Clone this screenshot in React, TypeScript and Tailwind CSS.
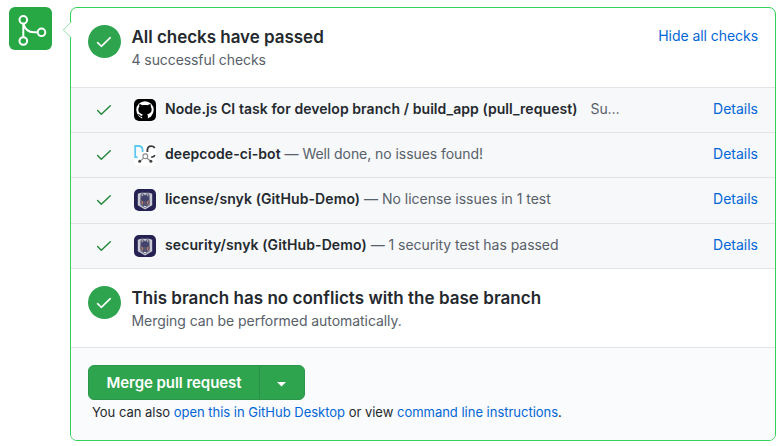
import React from "react";

function Tick({ weight = 1.5 }: { weight?: number }) {
  return (
    <svg width="16" height="12" viewBox="0 0 16 12" fill="none" stroke="currentColor" strokeWidth={weight} strokeLinecap="round" strokeLinejoin="round">
      <path d="M1.6 6.6 5.300 10.300 14.300 1.700" />
    </svg>
  );
}

function StatusCircle() {
  return (
    <div className="flex size-[33px] shrink-0 items-center justify-center rounded-full bg-[#2ea44f] pr-px text-white">
      <Tick weight={1.6} />
    </div>
  );
}

function GitHubAvatar() {
  return (
    <svg width="22" height="22" viewBox="0 0 22 22">
      <rect width="22" height="22" rx="5" fill="#000" />
      <circle cx="11" cy="11" r="8.700" fill="#fff" />
      <path
        d="M5.4 5.2c1.1-.1 2.2.5 3 1.1 1.7-.4 3.5-.4 5.2 0 .8-.6 1.9-1.2 3-1.1.4 1 .4 1.9.1 2.6.7.8 1 1.700 1 2.800 0 3-1.900 4.200-4.500 4.600.5.5.7 1.200.7 2v2.500c-2 .6-3.900.6-5.800 0v-1.900c-2.300.4-2.800-.8-3.400-1.700-.3-.5-.7-.7-.9-1 .9-.3 1.600.2 2.100 1 .5.8 1.200.9 2.200.7.1-.6.3-1.100.7-1.500-2.700-.4-4.500-1.700-4.500-4.700 0-1.100.3-2 1-2.800-.3-.7-.3-1.600.1-2.600Z"
        fill="#000"
      />
    </svg>
  );
}

function DeepCodeAvatar() {
  return (
    <svg width="22" height="22" viewBox="0 0 22 22" fill="none">
      <rect width="22" height="22" rx="5" fill="#fff" />
      <path d="M3.600 13.200H1.200V2h3.200C7.300 2 8.600 3.700 8.600 6v2" stroke="#5cc8f2" strokeWidth="1.800" />
      <path d="M13.400 8V5.900c0-2.300 1.500-3.700 3.700-3.700 1.600 0 2.900.7 3.700 1.800M17.200 13.200c1.800 0 2.900-.7 3.800-1.900" stroke="#3a3a3a" strokeWidth="1.800" />
      <circle cx="11.300" cy="12.300" r="2.400" stroke="#8b8b8b" strokeWidth="1.100" />
      <path d="M9.600 14.200 5.900 17.300M13 14.200l3.900 3.100" stroke="#8b8b8b" strokeWidth="1.100" />
      <circle cx="5.700" cy="17.300" r="1.500" fill="#444" />
      <circle cx="16.900" cy="17.300" r="1.500" fill="#444" />
    </svg>
  );
}

function SnykAvatar() {
  return (
    <svg width="22" height="22" viewBox="0 0 22 22">
      <rect width="22" height="22" rx="5" fill="#252152" />
      <path d="M3.800 4.700 7 3.800h8l3.200.9v11.500L11 20.600l-7.200-4.400Z" fill="#c9cad3" />
      <path d="M6 5.500h10v10.700l-5 3.100-5-3.100Z" fill="#85879b" />
      <path d="M7 9 8 1.200 9.900 6.200h2.200L14 1.200 15 9l.5 4.500-2 3L11 19l-2.500-2.500-2-3Z" fill="#41436d" />
      <path d="m7.700 7.800.5-4.900 1.200 3.500ZM14.300 7.800l-.5-4.900-1.200 3.500Z" fill="#aaa0a8" />
      <path d="M7.300 11 9.400 12.700 9 16.200 7.500 14ZM14.700 11 12.600 12.700l.4 3.500 1.500-2.200Z" fill="#b37c66" />
      <path d="M9.900 12h2.200l.5 4.500L11 18l-1.600-1.500Z" fill="#55566f" />
      <path d="M9.800 17h2.400v1.300H9.800Z" fill="#dddadd" />
    </svg>
  );
}

type RowProps = { avatar: React.ReactNode; name: React.ReactNode; note: React.ReactNode; className: string };

function CheckRow({ avatar, name, note, className }: RowProps) {
  return (
    <div className={"flex items-start border-b border-[#e1e4e8] bg-[#f6f8fa] pt-[10px] pr-[17px] pl-[25px] text-[14px] leading-[22px] " + className}>
      <span className="mt-[6px] text-[#22863a]"><Tick weight={1.4} /></span>
      <span className="ml-[22px] mt-px shrink-0">{avatar}</span>
      <span className="ml-[9px] flex whitespace-pre">{name}{note}</span>
      <a className="ml-auto text-[#0366d6]">Details</a>
    </div>
  );
}

export default function App() {
  return (
    <div className="flex h-[446px] w-[783px] overflow-hidden bg-white pt-[7px] pl-[9px] font-['Inter','Liberation_Sans',sans-serif] text-[#24292e]">
      <div className="size-[43px] shrink-0 rounded-[6px] bg-[#28a745]">
        <svg width="43" height="43" viewBox="0 0 43 43" fill="none" stroke="#fff" strokeWidth="2">
          <circle cx="14.300" cy="12.800" r="3.800" />
          <circle cx="14.300" cy="34" r="3.800" />
          <circle cx="32.500" cy="25.300" r="3.800" />
          <path d="M14.300 16.600v13.600M14.500 16.800c1.300 5.300 5 8.500 10.500 8.500h3.700" />
        </svg>
      </div>
      <main className="relative ml-[18px] h-[434px] w-[706px] shrink-0 rounded-[7px] border border-[#34d058]">
        <svg className="absolute top-[13px] left-[-9px]" width="10" height="18" viewBox="0 0 10 18">
          <path d="M9.500 .5 1.300 9l8.200 8" fill="#fff" stroke="#8fe3a3" strokeWidth="1" />
        </svg>
        <div className="overflow-hidden rounded-[6px]">
          <section className="flex h-[80px] items-start border-b border-[#e1e4e8] pt-[17px] pr-[17px] pl-[17px]">
            <StatusCircle />
            <div className="ml-[10.5px]">
              <h3 className="text-[17px] leading-[24px] font-semibold tracking-[-0.03px]">All checks have passed</h3>
              <p className="text-[14px] leading-[22px] tracking-[-0.08px] text-[#586069]">4 successful checks</p>
            </div>
            <a className="ml-auto text-[14px] leading-[22px] tracking-[-0.05px] text-[#0366d6]">Hide all checks</a>
          </section>
          <CheckRow className="h-[45px]" avatar={<GitHubAvatar />}
            name={<strong className="font-semibold tracking-[0.06px]">Node.js CI task for develop branch / build_app (pull_request)</strong>}
            note={<span className="ml-[13px] tracking-[-0.1px] text-[#586069]">Su…</span>} />
          <CheckRow className="h-[45px]" avatar={<DeepCodeAvatar />}
            name={<strong className="font-semibold tracking-[0.06px]">deepcode-ci-bot</strong>}
            note={<span className="tracking-[-0.06px] text-[#586069]"> — Well done, no issues found!</span>} />
          <CheckRow className="h-[46px]" avatar={<SnykAvatar />}
            name={<strong className="font-semibold tracking-[0.1px]">license/snyk (GitHub-Demo)</strong>}
            note={<span className="tracking-[-0.02px] text-[#586069]"> — No license issues in 1 test</span>} />
          <CheckRow className="h-[45px]" avatar={<SnykAvatar />}
            name={<strong className="font-semibold tracking-[0.1px]">security/snyk (GitHub-Demo)</strong>}
            note={<span className="tracking-[-0.04px] text-[#586069]"> — 1 security test has passed</span>} />
          <section className="flex h-[79px] items-start border-b border-[#e1e4e8] px-[17px] pt-[17px]">
            <StatusCircle />
            <div className="ml-[10.5px]">
              <h3 className="text-[17px] leading-[24px] font-semibold tracking-[0.03px]">This branch has no conflicts with the base branch</h3>
              <p className="text-[14px] leading-[22px] tracking-[-0.06px] text-[#586069]">Merging can be performed automatically.</p>
            </div>
          </section>
          <footer className="h-[92px] bg-[#fafbfc] pt-[17px] pl-[17px]">
            <div className="flex h-[35px] w-[217px] rounded-[6px] border border-[#2c974b] bg-[#2ea44f] text-white">
              <button className="w-[171px] border-r border-[#2a8f47] text-[15px] leading-[33px] font-semibold tracking-[-0.05px]">Merge pull request</button>
              <button className="flex flex-1 items-center justify-center pt-[3px] pr-[2px]" aria-label="More merge options">
                <svg width="9" height="5" viewBox="0 0 9 5"><path d="M0 0h9L4.500 4.500Z" fill="#fff" /></svg>
              </button>
            </div>
            <p className="ml-[4px] mt-[2px] text-[13px] leading-[20px] tracking-[-0.015px] whitespace-nowrap">
              You can also <a className="text-[#0366d6]">open this in GitHub Desktop</a> or view <a className="text-[#0366d6]">command line instructions</a>.
            </p>
          </footer>
        </div>
      </main>
    </div>
  );
}
